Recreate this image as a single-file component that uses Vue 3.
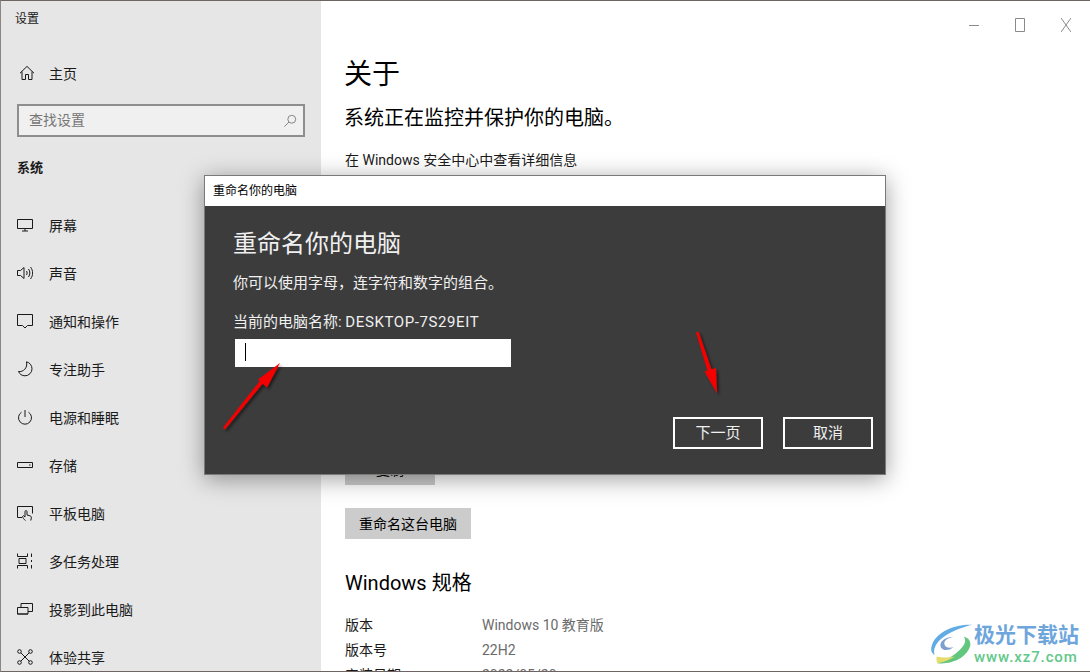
<script setup>
const navItems = [
  { label: '屏幕', icon: 'display' },
  { label: '声音', icon: 'sound' },
  { label: '通知和操作', icon: 'notify' },
  { label: '专注助手', icon: 'moon' },
  { label: '电源和睡眠', icon: 'power' },
  { label: '存储', icon: 'storage' },
  { label: '平板电脑', icon: 'tablet' },
  { label: '多任务处理', icon: 'multi' },
  { label: '投影到此电脑', icon: 'project' },
  { label: '体验共享', icon: 'share' }
]

const specs = [
  { name: '版本', value: 'Windows 10 教育版' },
  { name: '版本号', value: '22H2' },
  { name: '安装日期', value: '2022/05/20' }
]
</script>

<template>
  <div class="window">
    <aside class="sidebar">
      <div class="app-title">设置</div>
      <div class="home">
        <svg class="icon" viewBox="0 0 16 16"><path d="M1 8.200 8 1.400l7 6.800M3 6.500V14.500h3.500V9.500h3V14.500H13V6.500" /></svg>
        <span>主页</span>
      </div>
      <div class="search">
        <span>查找设置</span>
        <svg class="search-icon" viewBox="0 0 16 16"><circle cx="10" cy="6" r="4.500" /><path d="M6.800 9.200 1.500 14.500" /></svg>
      </div>
      <div class="group">系统</div>
      <nav class="nav">
        <div class="nav-item" v-for="item in navItems" :key="item.label">
          <svg class="icon" viewBox="0 0 16 16">
            <path v-if="item.icon === 'display'" d="M.5 2.500h15v9H.5zM8 11.500v2.500M5 14h6" />
            <template v-else-if="item.icon === 'sound'">
              <path d="M.5 5.500h3l3.500-3v11l-3.500-3h-3zM9.500 6c.8 1.200.8 2.800 0 4M11.500 4c1.800 2.400 1.800 5.600 0 8M13.500 2c2.800 3.600 2.800 8.400 0 12" />
            </template>
            <path v-else-if="item.icon === 'notify'" d="M.5 1.500h15v11h-5L8 15l-2.500-2.500h-5z" />
            <path v-else-if="item.icon === 'moon'" d="M9.500.8c3 .6 5.500 3.500 5.500 7a7 7 0 0 1-7 7c-3 0-5.500-1.700-6.500-4.300 4.500.8 9.500-3.500 8-9.700z" />
            <template v-else-if="item.icon === 'power'">
              <path d="M8 1v7M4.500 3.200a6.500 6.500 0 1 0 7 0" />
            </template>
            <template v-else-if="item.icon === 'storage'">
              <path d="M.5 5.500h15v5H.5zM12 8h1.500" />
            </template>
            <template v-else-if="item.icon === 'tablet'">
              <path d="M5 12.500H.5v-11h15v7M8.500 15.500c-1.500-1-2.500-2.500-3-4l1-.8 1.500 1.300V6.500c0-1.200 2-1.200 2 0V10l3 .8c1.200.4 1.500 1.200 1.300 2.200l-.5 2.500" />
            </template>
            <template v-else-if="item.icon === 'multi'">
              <path d="M.5.500v3h10v-3M.5 15.500v-3h10v3M2 5.500h7v5H2zM14.500.500v3.500M14.500 12v3.500M14.500 7v2" />
            </template>
            <template v-else-if="item.icon === 'project'">
              <path d="M4 6.500V2.500h11.500v8H11M.5 6.500h10.500v6.500H.5zM.5 13h10.500" />
            </template>
            <template v-else>
              <circle cx="2.500" cy="2.500" r="1.800" /><circle cx="13.500" cy="2.500" r="1.800" /><circle cx="2.500" cy="13.500" r="1.800" /><circle cx="13.500" cy="13.500" r="1.800" />
              <path d="M3.800 3.800l8.400 8.400M12.200 3.800l-8.400 8.400" />
            </template>
          </svg>
          <span>{{ item.label }}</span>
        </div>
      </nav>
    </aside>

    <main class="content">
      <div class="controls">
        <span class="control"><svg viewBox="0 0 10 14"><path d="M0 7.500h10" /></svg></span>
        <span class="control"><svg viewBox="0 0 10 14"><path d="M.5.500h9v13h-9z" /></svg></span>
        <span class="control"><svg viewBox="0 0 10 14"><path d="M0 0l10 14M10 0 0 14" /></svg></span>
      </div>
      <div class="page">
        <h1>关于</h1>
        <p class="status">系统正在监控并保护你的电脑。</p>
        <p class="link">在 Windows 安全中心中查看详细信息</p>
        <button class="flat copy">复制</button>
        <button class="flat rename">重命名这台电脑</button>
        <h2>Windows 规格</h2>
        <div class="spec" v-for="spec in specs" :key="spec.name">
          <span class="spec-name">{{ spec.name }}</span>
          <span class="spec-value">{{ spec.value }}</span>
        </div>
      </div>
    </main>

    <div class="dialog">
      <div class="dialog-bar">重命名你的电脑</div>
      <div class="dialog-body">
        <div class="dialog-title">重命名你的电脑</div>
        <p class="dialog-hint">你可以使用字母，连字符和数字的组合。</p>
        <p class="dialog-current">当前的电脑名称: <span class="pc-name">DESKTOP-7S29EIT</span></p>
        <div class="name-input"><i class="caret"></i></div>
        <div class="dialog-actions">
          <button class="outline">下一页</button>
          <button class="outline">取消</button>
        </div>
      </div>
    </div>

    <svg class="arrows" viewBox="0 0 1090 672">
      <defs>
        <filter id="arrow-shadow" x="-30%" y="-30%" width="170%" height="170%">
          <feDropShadow dx="2" dy="2" stdDeviation="1.500" flood-color="#000" flood-opacity="0.55" />
        </filter>
      </defs>
      <g filter="url(#arrow-shadow)" fill="#f40000">
        <path d="M223 427.500 225 429.500 264 382 261 379.500z" />
        <path d="M280 363 258 379.500 267 387.500z" />
        <path d="M696 332.500 698.500 331.500 712 371 708 372.500z" />
        <path d="M717 393.500 704.500 371.500 716 368z" />
      </g>
    </svg>

    <div class="watermark">
      <svg class="logo" viewBox="0 0 48 46">
        <path d="M46 2C30 1 8 8 2 24c-2 6 0 9 3 11-2-6 1-13 9-19C22 10 34 5 46 2z" fill="#62ace6" />
        <path d="M12 27c-3-6 4-12 14-12-7 1-12 5-10 9 1 3 6 4 10 2-4 4-11 5-14 1z" fill="#7d9fd0" />
        <path d="M8 44c14 2 32-5 36-19 1-5-2-9-7-10 3 4 1 9-4 14-7 7-16 12-25 15z" fill="#63c67f" />
        <path d="M8 44c7-1 14-4 19-7-6 1-14 1-20 0 0 3 0 5 1 7z" fill="#e6dc6c" />
      </svg>
      <div class="mark-text">
        <div class="mark-cn">极光下载站</div>
        <div class="mark-url">www.xz7.com</div>
      </div>
    </div>
  </div>
</template>

<style>
html, body {
  margin: 0;
  background: #fff;
  overflow: hidden;
}
</style>

<style scoped>
.window {
  position: relative;
  display: flex;
  width: 1090px;
  height: 672px;
  box-sizing: border-box;
  overflow: hidden;
  border-top: 1px solid #6e6462;
  border-left: 1px solid #8f8581;
  border-bottom: 1px solid #6e6462;
  font-family: Roboto, "Noto Sans CJK SC", sans-serif;
  font-size: 14px;
  color: #1a1a1a;
}

.sidebar {
  flex: none;
  width: 320px;
  background: #e6e6e6;
}

.app-title {
  padding: 10px 0 0 14px;
  height: 36px;
  box-sizing: border-box;
  font-size: 12px;
  line-height: 17px;
}

.home {
  display: flex;
  align-items: center;
  gap: 14px;
  height: 48px;
  margin-top: 12px;
  padding-left: 18px;
}

.icon {
  flex: none;
  width: 16px;
  height: 16px;
  fill: none;
  stroke: #1a1a1a;
  stroke-width: 1;
}

.search {
  display: flex;
  align-items: center;
  justify-content: space-between;
  width: 288px;
  height: 33px;
  box-sizing: border-box;
  margin: 7px 0 0 16px;
  padding: 0 6px 3px 10px;
  background: #f0f0f0;
  border: 2px solid #8e8e8e;
  color: #767676;
}

.search-icon {
  width: 14px;
  height: 14px;
  margin-top: 3px;
  fill: none;
  stroke: #767676;
  stroke-width: 1;
}

.group {
  margin: 20px 0 0 16px;
  height: 20px;
  font-size: 13px;
  line-height: 21px;
  font-weight: 700;
}

.nav {
  margin-top: 24px;
}

.nav-item {
  display: flex;
  align-items: center;
  gap: 16px;
  height: 48px;
  padding-left: 16px;
}

.content {
  flex: 1;
  min-width: 0;
  background: #fff;
}

.controls {
  display: flex;
  justify-content: flex-end;
  height: 32px;
  padding-right: 1px;
}

.control {
  display: flex;
  align-items: center;
  justify-content: center;
  width: 46px;
  height: 48px;
}

.control svg {
  width: 10px;
  height: 14px;
  fill: none;
  stroke: #8a8a8a;
  stroke-width: 1;
}

.page {
  padding-left: 24px;
}

h1 {
  margin: 22px 0 0 -1px;
  font-size: 28px;
  line-height: 40px;
  font-weight: 400;
  color: #000;
}

.status {
  margin: 8px 0 0 -1px;
  font-size: 20px;
  line-height: 30px;
  color: #000;
}

.link {
  margin: 17px 0 0;
  line-height: 20px;
}

.flat {
  display: block;
  padding: 0 0 2px;
  border: 0;
  background: #ccc;
  font: inherit;
  color: #000;
}

.copy {
  width: 90px;
  height: 31px;
  margin-top: 284px;
}

.rename {
  width: 126px;
  height: 31px;
  margin-top: 23px;
}

h2 {
  margin: 29px 0 0;
  font-size: 20px;
  line-height: 30px;
  font-weight: 400;
  color: #000;
}

.spec {
  display: flex;
  height: 25px;
  line-height: 20px;
}

.spec:first-of-type {
  margin-top: 17px;
}

.spec-name {
  width: 137px;
}

.spec-value {
  color: #6b6b6b;
}

.dialog {
  position: absolute;
  left: 203px;
  top: 174px;
  width: 682px;
  height: 300px;
  box-sizing: border-box;
  border: 1px solid #7a7a7a;
  box-shadow: 0 4px 22px rgba(0, 0, 0, 0.38);
  display: flex;
  flex-direction: column;
}

.dialog-bar {
  height: 30px;
  padding-left: 8px;
  background: #fff;
  color: #000;
  font-size: 12px;
  line-height: 31px;
}

.dialog-body {
  flex: 1;
  padding: 0 12px 25px 28px;
  background: #3c3c3c;
  color: #f0f0f0;
  font-size: 15px;
  display: flex;
  flex-direction: column;
}

.dialog-title {
  margin-top: 20px;
  font-size: 24px;
  line-height: 36px;
}

.dialog-hint {
  margin: 11px 0 0;
  line-height: 20px;
}

.dialog-current {
  margin: 19px 0 0;
  line-height: 20px;
}

.pc-name {
  letter-spacing: 0.6px;
}

.name-input {
  width: 276px;
  height: 28px;
  margin: 7px 0 0 2px;
  padding: 4px 0 0 10px;
  box-sizing: border-box;
  background: #fff;
}

.caret {
  display: block;
  width: 1px;
  height: 18px;
  background: #000;
}

.dialog-actions {
  display: flex;
  justify-content: flex-end;
  gap: 20px;
  margin-top: auto;
}

.outline {
  width: 90px;
  height: 32px;
  padding: 0 0 3px;
  background: transparent;
  border: 2px solid #fff;
  color: #f0f0f0;
  font: inherit;
}

.arrows {
  position: absolute;
  left: -1px;
  top: -1px;
  width: 1090px;
  height: 672px;
  pointer-events: none;
}

.watermark {
  position: absolute;
  right: 9px;
  bottom: 5px;
  display: flex;
  align-items: center;
  gap: 0;
  padding: 5px 2px 0 28px;
  background: linear-gradient(90deg, rgba(255, 255, 255, 0), #fff 25%);
}

.logo {
  width: 44px;
  height: 42px;
}

.mark-cn {
  font-size: 21px;
  line-height: 26px;
  font-weight: 700;
  color: #6ea6dc;
}

.mark-url {
  font-size: 15px;
  line-height: 18px;
  font-weight: 500;
  color: #62c88a;
  letter-spacing: 0.9px;
}
</style>
